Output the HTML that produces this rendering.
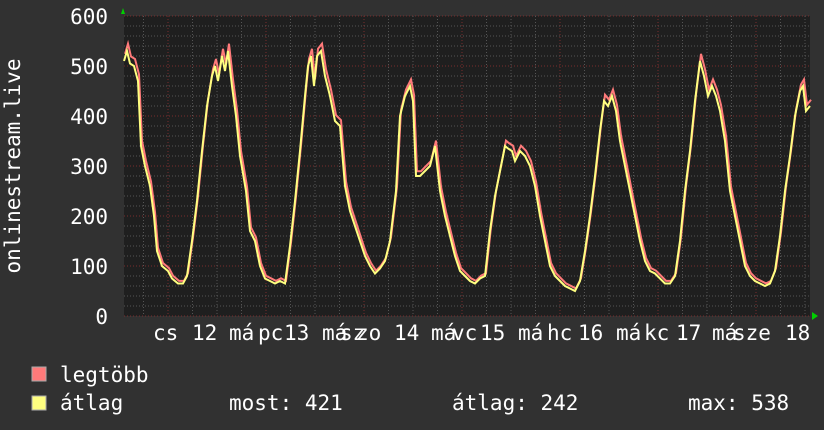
<!DOCTYPE html>
<html><head><meta charset="utf-8"><style>
html,body{margin:0;padding:0;background:#313131;width:824px;height:430px;overflow:hidden}
svg{display:block}
text{font-family:"DejaVu Sans Mono","Liberation Mono",monospace;fill:#fff}
</style></head><body>
<svg id="s" width="824" height="430" xmlns="http://www.w3.org/2000/svg">
<rect x="0" y="0" width="824" height="430" fill="#313131"/>
<rect x="124" y="16" width="686" height="300" fill="#1f1f1f"/>
<g id="grid"></g>
<polyline id="mx" fill="none" stroke="#ff7a7a" stroke-width="2"/>
<polyline id="av" fill="none" stroke="#ffff80" stroke-width="2"/>
<polygon points="121,14 125,14 123,8" fill="#00d000"/>
<polygon points="812,312 812,320 818,316" fill="#00d000"/>
<g font-size="21" text-anchor="end">
<text x="108" y="24">600</text><text x="108" y="74">500</text><text x="108" y="124">400</text>
<text x="108" y="174">300</text><text x="108" y="224">200</text><text x="108" y="274">100</text><text x="108" y="324">0</text>
</g>
<text font-size="21" transform="translate(20,166) rotate(-90)" text-anchor="middle">onlinestream.live</text>
<g font-size="21">
<text x="153" y="340">cs</text><text x="192" y="340">12</text><text x="229" y="340">má</text><text x="258" y="340">pc</text>
<text x="284" y="340">13</text><text x="322" y="340">má</text><text x="340" y="340">sz</text><text x="356" y="340">zo</text>
<text x="394" y="340">14</text><text x="431" y="340">má</text><text x="452" y="340">vc</text><text x="480" y="340">15</text>
<text x="518" y="340">má</text><text x="547" y="340">hc</text><text x="578" y="340">16</text><text x="616" y="340">má</text>
<text x="644" y="340">kc</text><text x="676" y="340">17</text><text x="712" y="340">má</text><text x="733" y="340">sze</text>
<text x="785" y="340">18</text>
</g>
<rect x="32" y="367" width="14" height="14" fill="#ff7a7a" stroke="#aaa" stroke-width="1"/>
<rect x="32" y="396" width="14" height="14" fill="#ffff80" stroke="#aaa" stroke-width="1"/>
<g font-size="21">
<text x="60" y="382">legtöbb</text>
<text x="60" y="410">átlag</text>
<text x="229" y="410">most: 421</text>
<text x="452" y="410">átlag: 242</text>
<text x="688" y="410">max: 538</text>
</g>
</svg>
<script>
var g=document.getElementById('grid'),h='';
for(var v=0;v<=600;v+=20){var y=316-v/2;var maj=v%100==0;
h+='<line x1="124" x2="810" y1="'+y+'" y2="'+y+'" stroke="'+(maj?'#7a2e2e':'#555')+'" stroke-dasharray="1,2"/>';}
for(var x=168-98;x<=810;x+=24.5){if(x<124)continue;var m=Math.abs(((x-168)%98))<1;
h+='<line y1="16" y2="316" x1="'+x+'" x2="'+x+'" stroke="'+(m?'#7a2e2e':'#555')+'" stroke-dasharray="1,2"/>';}
g.innerHTML=h;
var d=[124,510,127,530,130,505,134,500,138,470,141,340,145,300,150,260,154,200,157,130,162,100,168,90,172,75,178,65,183,65,187,80,192,150,197,230,202,330,207,420,212,480,215,500,218,470,222,520,225,490,228,530,232,460,236,400,240,320,246,250,250,170,255,150,260,100,265,75,270,70,275,65,280,70,285,65,290,140,295,230,300,330,305,440,308,500,311,520,314,460,317,520,321,530,325,480,330,440,335,390,340,380,345,260,350,210,355,180,360,150,365,120,370,100,375,85,380,95,385,110,390,150,396,250,400,400,405,440,410,460,413,430,416,280,420,280,425,290,430,300,435,340,440,250,445,200,450,160,455,120,460,90,465,80,470,70,475,65,480,75,485,80,490,170,495,240,500,290,505,340,508,335,512,330,515,310,520,330,525,320,530,300,535,260,540,200,545,150,550,100,555,80,560,70,565,60,570,55,575,50,580,70,585,130,590,200,595,280,600,370,604,430,608,420,612,440,616,410,620,350,625,300,630,250,635,200,640,150,645,110,650,90,655,85,660,75,665,65,670,65,675,80,680,150,685,250,690,330,695,430,700,510,704,480,708,440,712,460,716,440,720,410,725,350,730,250,735,200,740,150,745,100,750,80,755,70,760,65,765,60,770,65,775,90,780,160,785,250,790,320,795,400,800,450,803,460,806,410,810,420];
var a='',b='';for(var i=0;i<d.length;i+=2){var x=d[i],v=d[i+1];a+=x+','+(316-v/2)+' ';b+=(x+1)+','+(316-(v*1.02+4)/2)+' ';}
document.getElementById('mx').setAttribute('points',b);
document.getElementById('av').setAttribute('points',a);
</script>
</body></html>
